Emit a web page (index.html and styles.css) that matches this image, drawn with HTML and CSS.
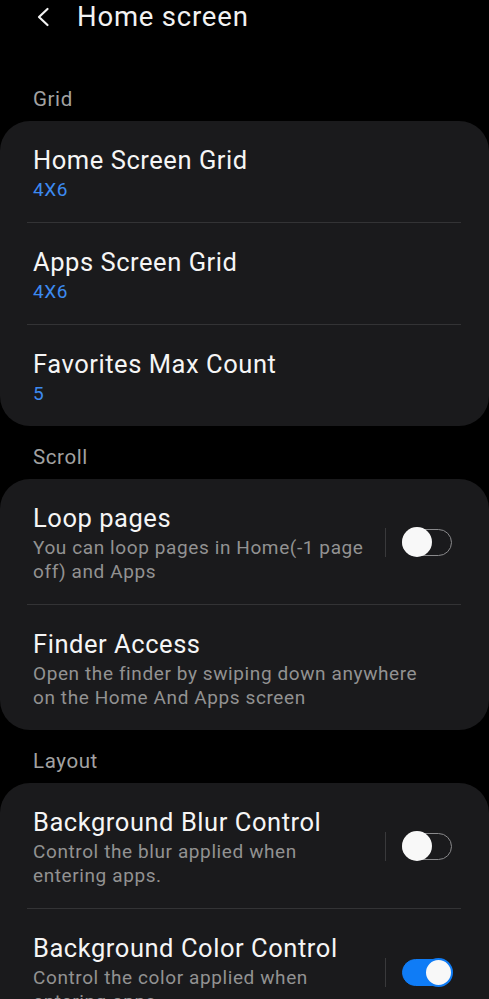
FILE: index.html
```html
<!DOCTYPE html>
<html>
<head>
<meta charset="utf-8">
<link rel="stylesheet" href="styles.css">
</head>
<body>
<header class="appbar">
  <svg class="back" width="14" height="20" viewBox="0 0 14 20"><path d="M11.5 2 L3 10 L11.5 18" fill="none" stroke="#f2f2f2" stroke-width="2.2" stroke-linecap="round" stroke-linejoin="round"/></svg>
  <h1 class="title">Home screen</h1>
</header>

<div class="section-label">Grid</div>
<section class="card">
  <div class="item">
    <div class="text"><div class="item-title">Home Screen Grid</div><div class="item-value">4X6</div></div>
  </div>
  <div class="divider"></div>
  <div class="item">
    <div class="text"><div class="item-title">Apps Screen Grid</div><div class="item-value">4X6</div></div>
  </div>
  <div class="divider"></div>
  <div class="item">
    <div class="text"><div class="item-title">Favorites Max Count</div><div class="item-value">5</div></div>
  </div>
</section>

<div class="section-label">Scroll</div>
<section class="card">
  <div class="item">
    <div class="text narrow"><div class="item-title">Loop pages</div><div class="item-sub">You can loop pages in Home(-1 page off) and Apps</div></div>
    <div class="sep"></div>
    <div class="switch"><div class="thumb"></div></div>
  </div>
  <div class="divider"></div>
  <div class="item plain">
    <div class="text"><div class="item-title">Finder Access</div><div class="item-sub">Open the finder by swiping down anywhere on the Home And Apps screen</div></div>
  </div>
</section>

<div class="section-label">Layout</div>
<section class="card">
  <div class="item">
    <div class="text narrow"><div class="item-title">Background Blur Control</div><div class="item-sub">Control the blur applied when entering apps.</div></div>
    <div class="sep"></div>
    <div class="switch"><div class="thumb"></div></div>
  </div>
  <div class="divider"></div>
  <div class="item">
    <div class="text narrow"><div class="item-title">Background Color Control</div><div class="item-sub">Control the color applied when entering apps.</div></div>
    <div class="sep"></div>
    <div class="switch on"><div class="thumb"></div></div>
  </div>
</section>
</body>
</html>
```

FILE: styles.css
```css
* { box-sizing: border-box; }
html, body { margin: 0; padding: 0; }
body {
  background: #000;
  width: 489px;
  height: 999px;
  overflow: hidden;
  font-family: Roboto, "Noto Sans", sans-serif;
  color: #f4f4f4;
}
.appbar {
  height: 68px;
  display: flex;
  align-items: flex-start;
  padding-left: 36px;
}
.back { margin-top: 7px; flex: none; }
.title {
  margin: 0 0 0 27px;
  font-size: 27.5px;
  font-weight: 400;
  line-height: 32px;
  letter-spacing: 0.8px;
  margin-top: 1px;
  color: #f2f2f2;
}
.section-label {
  padding: 19px 0 10px 33px;
  font-size: 20.5px;
  line-height: 24px;
  letter-spacing: 0.6px;
  color: #a2a2a2;
}
.card {
  background: #1a1a1c;
  border-radius: 30px;
}
.item {
  display: flex;
  align-items: center;
  padding: 24px 37px 20px 33px;
}
.item.plain { padding-right: 60px; }
.text { flex: 1; min-width: 0; }
.text.narrow { padding-right: 18px; }
.item-title {
  font-size: 25.5px;
  line-height: 30px;
  letter-spacing: 0.55px;
  color: #f5f5f5;
}
.item-value {
  margin-top: 3px;
  font-size: 19px;
  line-height: 24px;
  letter-spacing: 0.6px;
  color: #3d8af0;
}
.item-sub {
  margin-top: 3px;
  font-size: 19px;
  line-height: 24px;
  letter-spacing: 0.6px;
  color: #929292;
}
.divider {
  height: 1px;
  background: #333335;
  margin: 0 28px 0 27px;
}
.sep {
  width: 1px;
  height: 29px;
  background: #39393b;
  flex: none;
  margin-right: 16px;
  margin-top: -2px;
}
.switch {
  position: relative;
  width: 50px;
  height: 27px;
  border: 1.5px solid #8a8a8c;
  border-radius: 14px;
  flex: none;
  margin-top: -2px;
}
.thumb {
  position: absolute;
  left: -1.5px;
  top: -3px;
  width: 30px;
  height: 30px;
  border-radius: 50%;
  background: #f8f8f8;
}
.switch.on {
  background: #0f7cf6;
  border-color: #0f7cf6;
}
.switch.on .thumb {
  left: auto;
  right: -1.5px;
  top: -2.5px;
  width: 29px;
  height: 29px;
  border: 2px solid #0f7cf6;
}
```
